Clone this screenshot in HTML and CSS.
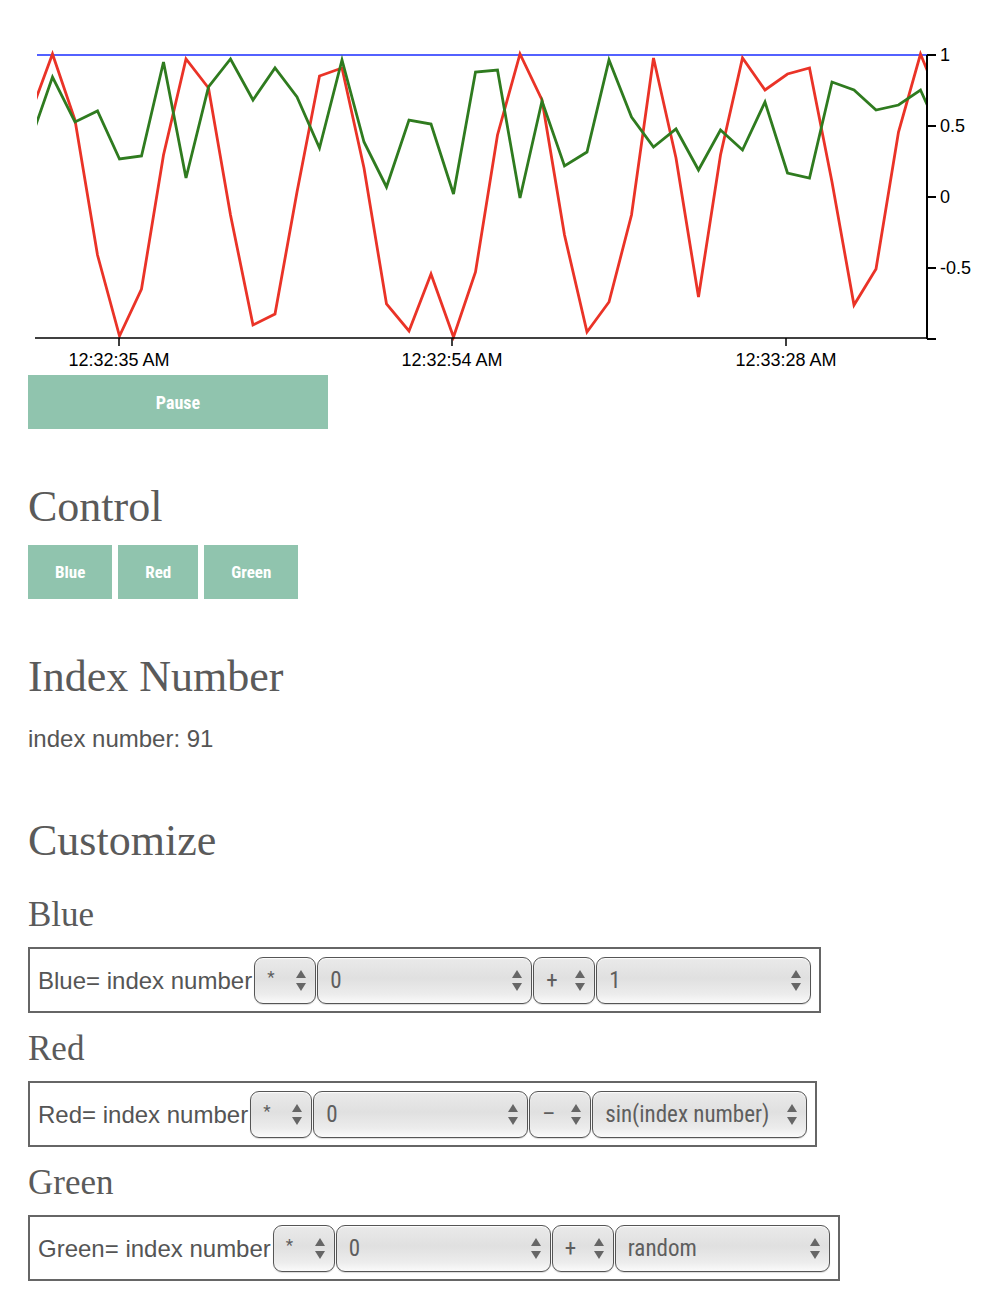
FILE: index.html
```html
<!DOCTYPE html>
<html>
<head>
    <title>Live Chart</title>
    <link rel="stylesheet" href="styles.css">
</head>
<body>
    <svg class="chart" width="992" height="375" viewBox="0 0 992 375">
        <defs>
            <clipPath id="plot"><rect x="37" y="40" width="890" height="310"/></clipPath>
        </defs>
        <g clip-path="url(#plot)">
            <line class="line-blue" x1="37" y1="55" x2="927" y2="55"/>
            <polyline class="line-red" points="30,115 52.5,54 75,120 97.5,255 119.5,336 141.5,289 163.5,155 186,59 208.5,88 230.5,215 253,325 275,314 297,192 319.5,76 342,68 364,168 386.5,304 409,331 431,274 453.5,337 475.5,272 497.5,135 520,54 542,100 564.5,235 587,332 609,302 631.5,215 653.5,58 676,158 698.5,297 720.5,155 742.5,58 765,90 787.5,74 809.5,68 832,182 854,305 876,269 898.5,132 920.5,54 943,109"/>
            <polyline class="line-green" points="30,142 52.5,77 75,122 97.5,111 119.5,159 141.5,156 163.5,62 186,178 208.5,87 230.5,59 253,100 275,68 297,97 319.5,148 342,60 364,142 386.5,187 409,120 431,124 453.5,194 475.5,72 497.5,70 520,198 542,101 564.5,166 587,152 609,60 631.5,117 653.5,147 676,129 698.5,170 720.5,130 742.5,150 765,102 787.5,173 809.5,178 832,82 854,90 876,110 898.5,105 920.5,90 943,140"/>
        </g>

        <!-- x axis -->
        <g class="axis">
            <path d="M35,338H927"/>
            <path d="M119,338V346M452,338V346M786,338V346"/>
            <text x="119" y="366" text-anchor="middle">12:32:35 AM</text>
            <text x="452" y="366" text-anchor="middle">12:32:54 AM</text>
            <text x="786" y="366" text-anchor="middle">12:33:28 AM</text>
        </g>

        <!-- y axis -->
        <g class="axis axis-y">
            <path d="M927,55V339"/>
            <path d="M927,55H936M927,126H936M927,197H936M927,268H936M927,339H936"/>
            <text x="940" y="61">1</text>
            <text x="940" y="132">0.5</text>
            <text x="940" y="203">0</text>
            <text x="940" y="274">-0.5</text>
        </g>
    </svg>

    <div class="page">
        <button class="btn pause-btn">Pause</button>

        <h2>Control</h2>
        <div class="controls">
            <button class="btn">Blue</button>
            <button class="btn">Red</button>
            <button class="btn">Green</button>
        </div>

        <h2>Index Number</h2>
        <p class="index-text">index number: 91</p>

        <h2 class="customize-title">Customize</h2>

        <h3>Blue</h3>
        <div class="formula">
            <span class="formula-label">Blue= index number</span>
            <div class="pick small"><span class="star">*</span><svg class="arrows" width="10" height="21" viewBox="0 0 10 21"><polygon points="0,8 5,0 10,8"/><polygon points="0,13 10,13 5,21"/></svg></div>
            <div class="pick wide"><span>0</span><svg class="arrows" width="10" height="21" viewBox="0 0 10 21"><polygon points="0,8 5,0 10,8"/><polygon points="0,13 10,13 5,21"/></svg></div>
            <div class="pick small"><span>+</span><svg class="arrows" width="10" height="21" viewBox="0 0 10 21"><polygon points="0,8 5,0 10,8"/><polygon points="0,13 10,13 5,21"/></svg></div>
            <div class="pick wide"><span>1</span><svg class="arrows" width="10" height="21" viewBox="0 0 10 21"><polygon points="0,8 5,0 10,8"/><polygon points="0,13 10,13 5,21"/></svg></div>
        </div>

        <h3>Red</h3>
        <div class="formula">
            <span class="formula-label">Red= index number</span>
            <div class="pick small"><span class="star">*</span><svg class="arrows" width="10" height="21" viewBox="0 0 10 21"><polygon points="0,8 5,0 10,8"/><polygon points="0,13 10,13 5,21"/></svg></div>
            <div class="pick wide"><span>0</span><svg class="arrows" width="10" height="21" viewBox="0 0 10 21"><polygon points="0,8 5,0 10,8"/><polygon points="0,13 10,13 5,21"/></svg></div>
            <div class="pick small"><span>–</span><svg class="arrows" width="10" height="21" viewBox="0 0 10 21"><polygon points="0,8 5,0 10,8"/><polygon points="0,13 10,13 5,21"/></svg></div>
            <div class="pick wide"><span>sin(index number)</span><svg class="arrows" width="10" height="21" viewBox="0 0 10 21"><polygon points="0,8 5,0 10,8"/><polygon points="0,13 10,13 5,21"/></svg></div>
        </div>

        <h3>Green</h3>
        <div class="formula">
            <span class="formula-label">Green= index number</span>
            <div class="pick small"><span class="star">*</span><svg class="arrows" width="10" height="21" viewBox="0 0 10 21"><polygon points="0,8 5,0 10,8"/><polygon points="0,13 10,13 5,21"/></svg></div>
            <div class="pick wide"><span>0</span><svg class="arrows" width="10" height="21" viewBox="0 0 10 21"><polygon points="0,8 5,0 10,8"/><polygon points="0,13 10,13 5,21"/></svg></div>
            <div class="pick small"><span>+</span><svg class="arrows" width="10" height="21" viewBox="0 0 10 21"><polygon points="0,8 5,0 10,8"/><polygon points="0,13 10,13 5,21"/></svg></div>
            <div class="pick wide"><span>random</span><svg class="arrows" width="10" height="21" viewBox="0 0 10 21"><polygon points="0,8 5,0 10,8"/><polygon points="0,13 10,13 5,21"/></svg></div>
        </div>
    </div>
</body>
</html>
```

FILE: styles.css
```css
/* General */
body {
    font-family: "Liberation Sans", Arial, sans-serif;
    margin: 0;
    color: #555;
    background: white;
}

.page {
    padding: 0 28px 20px;
}

/* Chart */
.chart {
    display: block;
}

.line-blue {
    stroke: #1a2dff;
    stroke-width: 1.6;
}

.line-red,
.line-green {
    fill: none;
    stroke-width: 2.8;
    stroke-linejoin: miter;
}

.line-red {
    stroke: #ea3327;
}

.line-green {
    stroke: #2f7b1f;
}

.axis path {
    fill: none;
    stroke: #000;
    stroke-width: 1.5;
}

.axis-y path {
    stroke-width: 2;
}

.axis text {
    font-family: "Liberation Sans", Arial, sans-serif;
    font-size: 18px;
    fill: #000;
}

/* Buttons */
.btn {
    background: #90c4ae;
    color: white;
    border: none;
    height: 54px;
    padding: 0 27px;
    font-family: "Liberation Sans Narrow", "Roboto Condensed", Roboto, sans-serif;
    font-weight: bold;
    font-size: 17px;
    cursor: pointer;
}

.pause-btn {
    display: block;
    width: 300px;
    font-size: 18px;
}

.controls {
    display: flex;
    gap: 6px;
}

/* Headings */
h2 {
    font-family: "Liberation Serif", serif;
    font-weight: normal;
    font-size: 44px;
    line-height: 52px;
    color: #5a5a5a;
    margin: 52px 0 12px;
}

.customize-title {
    margin-bottom: 28px;
}

h3 {
    font-family: "Liberation Serif", serif;
    font-weight: normal;
    font-size: 35px;
    line-height: 40px;
    color: #5a5a5a;
    margin: 16px 0 12px;
}

.index-text {
    font-size: 24px;
    line-height: 28px;
    margin: 22px 0 62px;
}

/* Formula rows */
.formula {
    display: flex;
    align-items: center;
    width: max-content;
    border: 2px solid #666;
    padding: 8px 8px 7px;
    font-size: 24px;
}

.formula-label {
    margin-right: 1px;
}

.pick {
    display: flex;
    align-items: center;
    justify-content: space-between;
    box-sizing: border-box;
    height: 47px;
    margin-left: 1px;
    padding: 0 9px 0 12px;
    border: 1.5px solid #555;
    border-radius: 9px;
    background: linear-gradient(#eaeaea, #e0e0e0 45%, #ececec 80%, #fafafa);
    box-shadow: inset 0 1px 1px rgba(255, 255, 255, 0.9), 0 1px 1px rgba(0, 0, 0, 0.15);
    font-family: "Liberation Sans Narrow", "Roboto Condensed", Roboto, sans-serif;
    font-size: 23px;
    color: #5e5e5e;
}

.pick .star {
    font-size: 17px;
    align-self: flex-start;
    margin-top: 9px;
}

.pick.small {
    width: 62px;
}

.pick.wide {
    width: 215px;
}

.arrows {
    fill: #666;
    flex-shrink: 0;
}
```
